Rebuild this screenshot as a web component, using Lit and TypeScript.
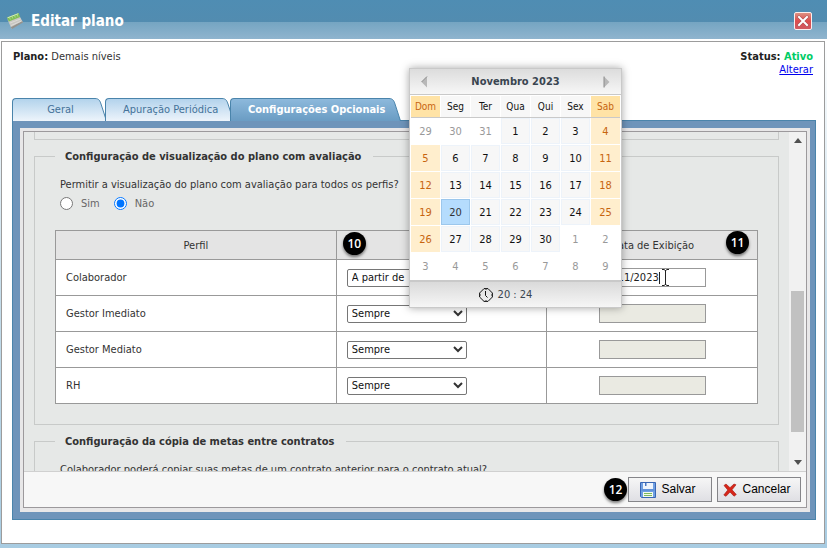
import { LitElement, html, css, svg, nothing } from "lit";
import { customElement, property, state } from "lit/decorators.js";
import { classMap } from "lit/directives/class-map.js";

const FONT = css`"DejaVu Sans Condensed", "DejaVu Sans", "Noto Sans", sans-serif`;

/* ---------- calendar popup ---------- */

@customElement("date-popup")
class DatePopup extends LitElement {
  static styles = css`
    :host {
      display: block;
      box-sizing: border-box;
      width: 213px;
      border: 1px solid #c9c9c9;
      background: #fff;
      box-shadow: 0 0 8px rgba(0, 0, 0, 0.35);
      font: 11px/13px ${FONT};
      color: #111;
    }
    .head {
      display: flex;
      align-items: center;
      justify-content: space-between;
      height: 25px;
      padding: 0 11px;
      border-bottom: 1px solid #c9c9c9;
      background: linear-gradient(#dcdcdc, #f7f7f7);
    }
    .title { font-weight: bold; color: #394550; }
    .nav {
      display: flex;
      border: 0;
      padding: 0;
      background: none;
    }
    table {
      width: 100%;
      table-layout: fixed;
      border-collapse: separate;
      border-spacing: 1px;
      text-align: center;
    }
    th, td { padding: 0; }
    th {
      height: 21px;
      background: #f7f7f7;
      font-size: 10px;
      font-weight: normal;
    }
    td {
      height: 24px;
      border: 1px solid #edf3fa;
      background: #f7f7f7;
    }
    thead tr { box-shadow: 0 1px #c9c9c9; }
    th.rest { background: #ffe3a6; color: #c7650f; }
    td.rest { background: #ffeecd; border-color: #ffeecd; color: #c7650f; }
    td.out { background: #fff; border-color: #fff; color: #999; }
    td.today { background: #b5dcfd; border-color: #9cc7ec; color: #333; }
    .foot {
      display: flex;
      align-items: center;
      justify-content: center;
      gap: 5px;
      height: 25px;
      padding-right: 20px;
      border-top: 2px solid #c9c9c9;
      background: linear-gradient(#dadada, #f6f6f6);
      color: #394550;
    }
  `;

  render() {
    const days = ["Dom", "Seg", "Ter", "Qua", "Qui", "Sex", "Sab"];
    const weeks = Array.from({ length: 6 }, (_, w) =>
      Array.from({ length: 7 }, (_, d) => {
        const n = w * 7 + d - 2;
        const out = n < 1 || n > 30;
        return { label: n < 1 ? n + 31 : n > 30 ? n - 30 : n, out, today: n === 20, rest: !out && (d === 0 || d === 6) };
      }));
    return html`
      <div class="head">
        <button class="nav" aria-label="Mês anterior">
          <svg width="7" height="12" viewBox="0 0 7 12"><path d="M6 .5v11L.5 6z" fill="#b8b8b8" /><path d="M6 .5L.5 6" stroke="#8c8c8c" /></svg>
        </button>
        <span class="title">Novembro 2023</span>
        <button class="nav" aria-label="Próximo mês">
          <svg width="7" height="12" viewBox="0 0 7 12"><path d="M1 .5v11L6.500 6z" fill="#b8b8b8" /><path d="M1 .5v11" stroke="#8c8c8c" /></svg>
        </button>
      </div>
      <table>
        <thead><tr>${days.map((d, i) => html`<th class=${classMap({ rest: i === 0 || i === 6 })}>${d}</th>`)}</tr></thead>
        <tbody>${weeks.map((w) => html`<tr>${w.map((c) => html`
          <td class=${classMap({ out: c.out, rest: c.rest, today: c.today })}>${c.label}</td>`)}</tr>`)}</tbody>
      </table>
      <div class="foot">
        <svg width="14" height="14" viewBox="0 0 14 14" fill="none" stroke="#111">
          <path d="M5 .6h4L13.400 5v4L9 13.400H5L.6 9V5z" /><path d="M6.500 3v4.500L8.500 9.500" />
          <path d="M7 1v1M7 12v1M1 7h1M12 7h1" stroke-width=".8" />
        </svg>
        <span>20 : 24</span>
      </div>`;
  }
}

/* ---------- tab ---------- */

@customElement("folder-tab")
class FolderTab extends LitElement {
  @property() label = "";
  @property({ type: Boolean, reflect: true }) active = false;

  static styles = css`
    :host { display: flex; height: 23px; }
    button {
      box-sizing: border-box;
      flex: 1;
      padding: 0 4px 0 17px;
      border: 1px solid #4a84ab;
      border-width: 1px 0 0 1px;
      border-radius: 4px 0 0 0;
      background: linear-gradient(#b3d3ec, #edf4fb);
      color: #447299;
      font: 11px/20px ${FONT};
      white-space: nowrap;
      text-align: center;
    }
    :host([active]) button {
      background: linear-gradient(#8db9dc, #6a9cc3);
      color: #fff;
      font-weight: bold;
    }
    svg { display: block; flex: none; }
  `;

  render() {
    const [a, b] = this.active ? ["#8db9dc", "#6a9cc3"] : ["#b3d3ec", "#edf4fb"];
    return html`
      <button role="tab" aria-selected=${this.active}>${this.label}</button>
      <svg width="12" height="23" viewBox="0 0 12 23">
        <defs><linearGradient id="g" x1="0" y1="0" x2="0" y2="1">
          <stop offset="0" stop-color=${a} /><stop offset="1" stop-color=${b} />
        </linearGradient></defs>
        <path d="M0 .5C4 .5 5 3 6 6l5.500 17H0z" fill="url(#g)" />
        <path d="M0 .5C4 .5 5 3 6 6l5.500 17" fill="none" stroke="#4a84ab" />
      </svg>`;
  }
}

/* ---------- page ---------- */

const upArrow = svg`<path d="M0 5l4-5 4 5z" fill="#505050" />`;
const downArrow = svg`<path d="M0 0l4 5 4-5z" fill="#505050" />`;

@customElement("app-root")
class AppRoot extends LitElement {
  @state() private rows = [
    { name: "Colaborador", rule: "A partir de", date: "20/11/2023" },
    { name: "Gestor Imediato", rule: "Sempre", date: "" },
    { name: "Gestor Mediato", rule: "Sempre", date: "" },
    { name: "RH", rule: "Sempre", date: "" },
  ];

  static styles = css`
    :host {
      position: relative;
      display: flex;
      flex-direction: column;
      height: 100vh;
      background: linear-gradient(#fff 40px, #c4dcea 300px, #a8cce2);
      font: 11px/13px ${FONT};
      color: #333;
    }
    * { box-sizing: border-box; }
    header {
      display: flex;
      align-items: center;
      gap: 8px;
      flex: none;
      height: 39px;
      padding: 2px 15px 0 7px;
      background: linear-gradient(#4f8db3, #528cb0 22px, #75a5c2 22px, #8fb4ce);
    }
    h1 {
      flex: 1;
      margin: 0;
      font-size: 15px;
      line-height: 18px;
      color: #fff;
    }
    .close {
      display: block;
      border: 0;
      padding: 0;
      background: none;
    }
    .close svg, header svg { display: block; }
    .window {
      flex: 1;
      min-height: 0;
      display: flex;
      flex-direction: column;
      margin: 2px 2px 4px 1px;
      padding: 8px 8px 23px 10px;
      border: 1px solid #9c9c9c;
      background: #fff;
    }
    .info {
      display: flex;
      justify-content: space-between;
      height: 48px;
      padding: 0 3px 0 1px;
    }
    .info > div:last-child { text-align: right; }
    .info strong { color: #222; }
    .info .on { color: #0c6; }
    .info a { color: #00e; }
    .tabs { display: flex; flex: none; margin-bottom: -1px; position: relative; }
    .tabs folder-tab + folder-tab { margin-left: -2px; }
    .t1 { width: 95px; }
    .t2 { width: 127px; }
    .t3 { width: 170px; }
    .panel {
      flex: 1;
      min-height: 0;
      display: flex;
      border: 1px solid #4a84ab;
      padding: 7px 5px 7px 7px;
      background: #6e94ba;
    }
    .mat {
      flex: 1;
      min-width: 0;
      display: flex;
      padding: 3px 3px 4px;
      background: #e8e7e8;
    }
    .sheet {
      flex: 1;
      min-width: 0;
      display: flex;
      flex-direction: column;
      border: 1px solid #9c999c;
    }
    .view {
      flex: 1;
      min-height: 0;
      display: flex;
      background: #e6e8e7;
    }
    .content {
      flex: 1;
      min-width: 0;
      overflow: hidden;
      padding: 0 10px;
    }
    .bar {
      display: flex;
      flex-direction: column;
      align-items: center;
      justify-content: space-between;
      flex: none;
      width: 17px;
      padding: 6px 0;
      background: #f1f1f1;
    }
    .track {
      flex: 1;
      display: flex;
      flex-direction: column;
      width: 13px;
      padding: 0 0 28px;
    }
    .track::before { content: ""; flex: 147; }
    .thumb { flex: 140; background: #c1c1c1; }
    fieldset {
      min-width: 0;
      margin: 0;
      padding: 0 20px 20px;
      border: 1px solid #c8cac9;
    }
    legend {
      padding: 0 12px 0 10px;
      line-height: 15px;
      font-weight: bold;
    }
    .previous { height: 8px; padding: 0; margin-bottom: 9px; border-top: 0; }
    .copy { margin-top: 9px; }
    .question { margin: 14px 5px 5px; }
    .choices {
      display: flex;
      align-items: center;
      height: 14px;
      margin: 0 5px 20px;
      color: #666;
    }
    .choices label { display: flex; align-items: center; gap: 8px; margin-right: 14px; }
    .choices input { width: 13px; height: 13px; margin: 0; accent-color: #0075ff; }
    .grid {
      width: 100%;
      table-layout: fixed;
      border-collapse: collapse;
      background: #fff;
    }
    .grid th, .grid td { border: 1px solid #999; padding: 0 10px; }
    .grid th { height: 29px; background: #e4e4e4; font-weight: normal; position: relative; }
    .grid td { height: 36px; }
    .c1 { width: 40%; }
    .c2 { width: 30%; }
    .grid th:first-child { text-align: center; }
    .grid td:last-child { text-align: center; }
    .pick { position: relative; display: block; width: 120px; }
    select {
      display: block;
      appearance: none;
      width: 120px;
      height: 18px;
      padding: 0 4px;
      border: 1px solid #767676;
      border-radius: 2px;
      background: #fff;
      color: #111;
      font: 11px/16px ${FONT};
    }
    .pick svg { position: absolute; right: 4px; top: 5px; pointer-events: none; }
    .date {
      display: block;
      width: 107px;
      height: 19px;
      padding: 0 2px;
      border: 1px solid #999;
      background: #fff;
      color: #222;
      font: 11px/17px ${FONT};
    }
    .date:disabled { background: #eaeae2; }
    .date-box { position: relative; display: inline-block; vertical-align: middle; }
    .cursor { position: absolute; left: 58px; top: 1px; }
    .badge {
      display: flex;
      align-items: center;
      justify-content: center;
      width: 23px;
      height: 23px;
      border-radius: 50%;
      background: #000;
      box-shadow: 0 2px 3px rgba(0, 0, 0, 0.5);
      color: #fff;
      font: 600 12px/22px "Open Sans", "Noto Sans", sans-serif;
    }
    th .badge { position: absolute; top: 1px; left: 6px; }
    th:last-child .badge { top: 0; left: auto; right: 8px; }
    .actions {
      display: flex;
      align-items: center;
      justify-content: flex-end;
      flex: none;
      gap: 5px;
      height: 36px;
      padding: 0 5px;
      border-top: 1px solid #d0d0d0;
      background: #f7f7f7;
    }
    .actions .badge { margin-right: -4px; }
    .actions button {
      display: flex;
      align-items: center;
      justify-content: center;
      gap: 5px;
      width: 84px;
      height: 25px;
      padding: 0 4px 0 0;
      border: 1px solid #858589;
      background: linear-gradient(#f6f6f6, #dfdfe4);
      color: #000;
      font: 12px/15px "Liberation Sans", Arial, sans-serif;
    }
    date-popup { position: absolute; top: 68px; right: 205px; }
  `;

  private titleIcon() {
    return html`<svg width="16" height="16" viewBox="0 0 16 16">
      <path d="M.5 6.500L12.500 3l3.300 6L4.500 15.800z" fill="#c9c7c2" />
      <path d="M3.800 14.200L15.400 8l.5 1.500L5 16z" fill="#94928d" />
      <path d="M0 4.500L11.500 0l1.700 4L1.800 8.500z" fill="#7fbf55" />
      <path d="M.5 4.800L11.300.7" stroke="#d3ecc0" fill="none" />
      <path d="M2.500 4.500l.8 2M5 3.500l.8 2M7.500 2.500l.8 2M10 1.500l.8 2" stroke="#b9e09c" stroke-width=".8" />
      <path d="M3 10l10.500-4M4 12.500L14.500 8" stroke="#dddbd7" />
    </svg>`;
  }

  render() {
    return html`
      <header>
        ${this.titleIcon()}
        <h1>Editar plano</h1>
        <button class="close" aria-label="Fechar">
          <svg width="18" height="18" viewBox="0 0 18 18">
            <defs><linearGradient id="r" x1="0" y1="0" x2="0" y2="1">
              <stop offset="0" stop-color="#dd9585" /><stop offset=".5" stop-color="#dc4c4c" /><stop offset="1" stop-color="#cf5a62" />
            </linearGradient></defs>
            <rect x=".5" y=".5" width="17" height="17" rx="1.500" fill="url(#r)" stroke="#fbeeee" />
            <path d="M5 5l8 8M13 5l-8 8" stroke="#a3484e" stroke-width="3" stroke-linecap="square" />
            <path d="M5 5l8 8M13 5l-8 8" stroke="#fff" stroke-width="2" stroke-linecap="square" />
          </svg>
        </button>
      </header>
      <main class="window">
        <div class="info">
          <div><strong>Plano:</strong> Demais níveis</div>
          <div><strong>Status: <span class="on">Ativo</span></strong><br /><a href="#alterar">Alterar</a></div>
        </div>
        <div class="tabs" role="tablist">
          <folder-tab class="t1" label="Geral"></folder-tab>
          <folder-tab class="t2" label="Apuração Periódica"></folder-tab>
          <folder-tab class="t3" label="Configurações Opcionais" active></folder-tab>
        </div>
        <section class="panel"><div class="mat"><div class="sheet">
          <div class="view">
            <div class="content">
              <fieldset class="previous"></fieldset>
              <fieldset>
                <legend>Configuração de visualização do plano com avaliação</legend>
                <p class="question" id="q">Permitir a visualização do plano com avaliação para todos os perfis?</p>
                <div class="choices" role="radiogroup" aria-labelledby="q">
                  <label><input type="radio" name="all" />Sim</label>
                  <label><input type="radio" name="all" checked />Não</label>
                </div>
                ${this.table()}
              </fieldset>
              <fieldset class="copy">
                <legend>Configuração da cópia de metas entre contratos</legend>
                <p class="question">Colaborador poderá copiar suas metas de um contrato anterior para o contrato atual?</p>
              </fieldset>
            </div>
            <div class="bar">
              <svg width="8" height="5">${upArrow}</svg>
              <div class="track"><div class="thumb"></div></div>
              <svg width="8" height="5">${downArrow}</svg>
            </div>
          </div>
          <div class="actions">
            <span class="badge">12</span>
            <button>
              <svg width="16" height="16" viewBox="0 0 16 16">
                <path d="M.5 .5h15v15h-14l-1-1z" fill="#6f9fe2" stroke="#3866b4" />
                <path d="M3 1h10v6H3z" fill="#eef4fc" /><path d="M5 1h1.500v3H5z" fill="#4677c4" />
                <path d="M1.500 8h13" stroke="#5585d0" />
                <path d="M3 10h10v5H3z" fill="#f4faee" /><path d="M4 11.500h8M4 13.500h8" stroke="#7cb95c" />
              </svg>Salvar
            </button>
            <button>
              <svg width="14" height="14" viewBox="0 0 14 14">
                <path d="M1 2.500L3 1l4 3.700L11 1l2 .8-4 5 4.300 4.700-2.300 1.700L7 9l-4 4.300L.8 12l4-5z" fill="#d7261a" stroke="#a3150d" stroke-width=".6" />
              </svg>Cancelar
            </button>
          </div>
        </div></div></section>
      </main>
      <date-popup></date-popup>`;
  }

  private table() {
    return html`<table class="grid">
      <colgroup><col class="c1" /><col class="c2" /><col /></colgroup>
      <thead><tr>
        <th>Perfil</th>
        <th><span class="badge">10</span></th>
        <th>Data de Exibição<span class="badge">11</span></th>
      </tr></thead>
      <tbody>${this.rows.map((r) => html`<tr>
        <td>${r.name}</td>
        <td><span class="pick">
          <select aria-label=${`Visualização: ${r.name}`}><option>${r.rule}</option></select>
          <svg width="10" height="7" viewBox="0 0 10 7"><path d="M1 1l4 4 4-4" fill="none" stroke="#333" stroke-width="2" /></svg>
        </span></td>
        <td><span class="date-box">
          <input class="date" aria-label=${`Data de exibição: ${r.name}`} .value=${r.date} ?disabled=${!r.date} />
          ${r.date ? html`<svg class="cursor" width="13" height="17" viewBox="0 0 13 17" fill="none" stroke="#222">
            <path d="M2.500 3v12" />
            <path d="M5 .5h2l1.500 1L10 .5h2M5 16.500h2l1.500-1 1.500 1h2M8.500 1v15" />
          </svg>` : nothing}
        </span></td>
      </tr>`)}</tbody>
    </table>`;
  }
}
